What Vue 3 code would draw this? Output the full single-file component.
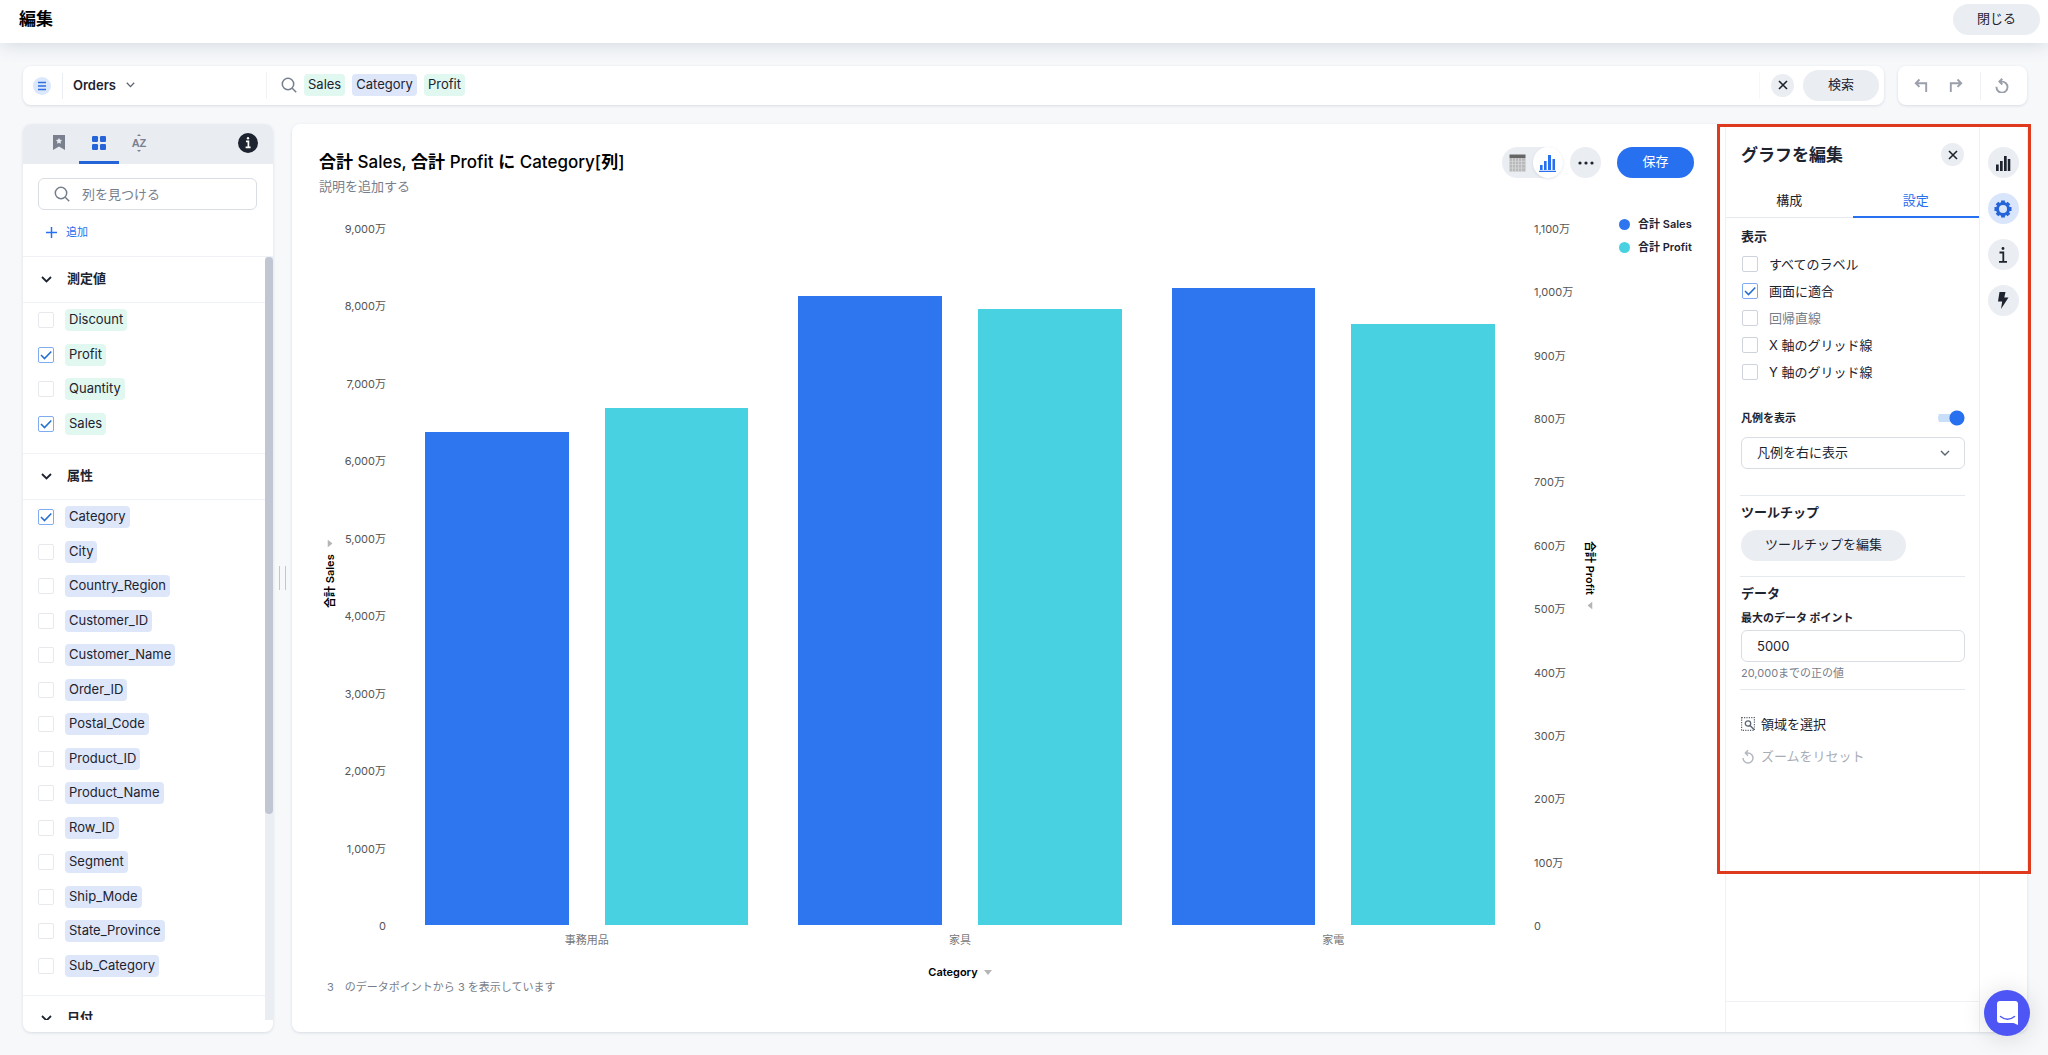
<script setup>
import { ref, reactive } from 'vue'

const tokens = [
  { name: 'Sales', kind: 'measure' },
  { name: 'Category', kind: 'attribute' },
  { name: 'Profit', kind: 'measure' },
]

const groups = reactive([
  {
    id: 'measures',
    title: '測定値',
    kind: 'measure',
    columns: [
      { name: 'Discount', on: false },
      { name: 'Profit', on: true },
      { name: 'Quantity', on: false },
      { name: 'Sales', on: true },
    ],
  },
  {
    id: 'attributes',
    title: '属性',
    kind: 'attribute',
    columns: [
      { name: 'Category', on: true },
      { name: 'City', on: false },
      { name: 'Country_Region', on: false },
      { name: 'Customer_ID', on: false },
      { name: 'Customer_Name', on: false },
      { name: 'Order_ID', on: false },
      { name: 'Postal_Code', on: false },
      { name: 'Product_ID', on: false },
      { name: 'Product_Name', on: false },
      { name: 'Row_ID', on: false },
      { name: 'Segment', on: false },
      { name: 'Ship_Mode', on: false },
      { name: 'State_Province', on: false },
      { name: 'Sub_Category', on: false },
    ],
  },
  { id: 'dates', title: '日付', kind: 'attribute', columns: [] },
])

// Values are in units of 万
const SALES_MAX = 9000
const PROFIT_MAX = 1100
const salesTicks = ['9,000万', '8,000万', '7,000万', '6,000万', '5,000万', '4,000万', '3,000万', '2,000万', '1,000万', '0']
const profitTicks = ['1,100万', '1,000万', '900万', '800万', '700万', '600万', '500万', '400万', '300万', '200万', '100万', '0']
const series = [
  { label: '事務用品', sales: 6368, profit: 816 },
  { label: '家具', sales: 8120, profit: 972 },
  { label: '家電', sales: 8230, profit: 949 },
]
const height = (value, max) => ({ height: (value / max) * 100 + '%' })

const display = reactive([
  { label: 'すべてのラベル', on: false },
  { label: '画面に適合', on: true },
  { label: '回帰直線', on: false, disabled: true },
  { label: 'X 軸のグリッド線', on: false },
  { label: 'Y 軸のグリッド線', on: false },
])
const showLegend = ref(true)
const legendPosition = ref('right')
const maxPoints = ref('5000')
</script>

<template>
  <div class="app">
    <header class="topbar">
      <h1>編集</h1>
      <button class="pill">閉じる</button>
    </header>

    <div class="toolbar">
      <div class="card searchbar">
        <div class="source">
          <span class="source-icon">
            <svg width="8" height="10" viewBox="0 0 8 10"><path d="M0 1.5h8M0 5h8M0 8.5h8" stroke="#2f6fe0" stroke-width="1.3" /></svg>
          </span>
          <button class="source-name">
            Orders
            <svg width="9" height="6" viewBox="0 0 9 6"><path d="M.8.8 4.500 4.600 8.200.8" fill="none" stroke="#5b6270" stroke-width="1.300" /></svg>
          </button>
        </div>
        <div class="query">
          <svg class="lens" width="16" height="16" viewBox="0 0 16 16"><circle cx="7" cy="7" r="5.700" /><path d="m11.200 11.200 4 4" /></svg>
          <span v-for="t in tokens" :key="t.name" class="chip" :class="t.kind">{{ t.name }}</span>
          <input type="text" aria-label="検索" />
          <button class="round small" aria-label="クリア">
            <svg width="10" height="10" viewBox="0 0 10 10"><path d="m1 1 8 8M9 1 1 9" stroke="#1d232f" stroke-width="1.600" /></svg>
          </button>
          <button class="pill search">検索</button>
        </div>
      </div>
      <div class="card history">
        <button aria-label="元に戻す">
          <svg width="14" height="15" viewBox="0 0 14 15"><path d="M5.500 1.500 1.800 5.200l3.700 3.700M2 5.200h10.200V14" /></svg>
        </button>
        <button aria-label="やり直し">
          <svg width="14" height="15" viewBox="0 0 14 15"><path d="m8.500 1.500 3.700 3.700-3.700 3.700M12 5.200H1.800V14" /></svg>
        </button>
        <button class="reset" aria-label="リセット">
          <svg width="14" height="15" viewBox="0 0 14 15"><path d="M1.500 8.800A5.500 5.500 0 1 0 7 3.600H4.500M7.300.8 4.400 3.600l2.900 2.900" /></svg>
        </button>
      </div>
    </div>

    <main class="workspace">
      <aside class="card sidebar">
        <nav class="side-tabs">
          <button aria-label="ブックマーク">
            <svg width="12" height="15" viewBox="0 0 12 15"><path fill="#7a808e" d="M0 0h12v15l-6-3.500L0 15z" /><path fill="#e9edf2" d="m6 2.800.95 2 2.150.3-1.550 1.500.37 2.150L6 7.700 4.080 8.750l.37-2.150L2.900 5.100l2.150-.3z" /></svg>
          </button>
          <button class="active" aria-label="グループ">
            <svg width="14" height="14" viewBox="0 0 14 14" fill="#2563d8"><rect width="6" height="6" rx="1.200" /><rect x="8" width="6" height="6" rx="1.200" /><rect y="8" width="6" height="6" rx="1.200" /><rect x="8" y="8" width="6" height="6" rx="1.200" /></svg>
          </button>
          <button class="az" aria-label="並べ替え">
            <svg width="6" height="2" viewBox="0 0 6 2"><path d="M3 0 5 2H1z" fill="#7a808e" /></svg>
            <span>AZ</span>
            <svg width="6" height="2" viewBox="0 0 6 2"><path d="M3 2 5 0H1z" fill="#7a808e" /></svg>
          </button>
          <button class="info" aria-label="情報">
            <svg width="20" height="20" viewBox="0 0 20 20"><circle cx="10" cy="10" r="10" fill="#1d232f" /><path d="M8 8.300h2.400v6M7.600 14.300h5" fill="none" stroke="#fff" stroke-width="1.700" /><circle cx="10" cy="5.200" r="1.200" fill="#fff" /></svg>
          </button>
        </nav>

        <label class="find">
          <svg class="lens" width="16" height="16" viewBox="0 0 16 16"><circle cx="7" cy="7" r="5.700" /><path d="m11.200 11.200 4 4" /></svg>
          <input type="text" placeholder="列を見つける" aria-label="列を見つける" />
        </label>
        <button class="add">
          <svg width="11" height="11" viewBox="0 0 11 11"><path d="M5.500 0v11M0 5.500h11" stroke="#2770ef" stroke-width="1.500" /></svg>
          追加
        </button>

        <div class="scroll-area">
          <div class="groups">
            <section v-for="g in groups" :key="g.id">
              <h2>
                <svg width="11" height="7" viewBox="0 0 11 7"><path d="m1 1 4.500 4.500L10 1" fill="none" stroke="#1d232f" stroke-width="1.800" /></svg>
                {{ g.title }}
              </h2>
              <div class="columns" :class="g.id">
                <label v-for="c in g.columns" :key="c.name" class="column">
                  <input v-model="c.on" type="checkbox" class="check faint" />
                  <span class="chip" :class="g.kind">{{ c.name }}</span>
                </label>
              </div>
            </section>
          </div>
          <div class="track"><div class="thumb"></div></div>
        </div>
      </aside>

      <div class="splitter"><i></i><i></i></div>

      <section class="card answer">
        <div class="chart">
          <div class="chart-head">
            <div class="titles">
              <h2><b>合計</b> Sales, <b>合計</b> Profit <b>に</b> Category[<b>列</b>]</h2>
              <p>説明を追加する</p>
            </div>
            <div class="switcher">
              <button aria-label="表">
                <svg width="17" height="18" viewBox="0 0 17 18"><path fill="#b9b9b9" d="M.5 4h16v13.500H.5z" /><path fill="#666" d="M.5.500h16V4H.5z" /><path d="M3.500 4v14M6.500 4v14M9.500 4v14M12.500 4v14M.5 7.300h16M.5 10.600h16M.5 14h16" stroke="#d9dbde" stroke-width=".7" /></svg>
              </button>
              <button class="active" aria-label="グラフ">
                <svg width="17" height="18" viewBox="0 0 17 18"><path fill="#2770ef" d="M1 11h2.600v5H1zM5 7h2.600v9H5zM9 1h3v15H9zM13.500 5H16v11h-2.500zM0 16.800h17V18H0z" /></svg>
              </button>
            </div>
            <button class="round" aria-label="その他">
              <svg width="16" height="4" viewBox="0 0 16 4" fill="#1d232f"><circle cx="2" cy="2" r="1.600" /><circle cx="8" cy="2" r="1.600" /><circle cx="14" cy="2" r="1.600" /></svg>
            </button>
            <button class="pill save">保存</button>
          </div>

          <div class="plot-grid">
            <div class="axis-title left"><span>合計 Sales</span><svg width="8" height="5" viewBox="0 0 8 5"><path d="M0 0h8L4 5z" /></svg></div>
            <ol class="ticks left"><li v-for="t in salesTicks" :key="t">{{ t }}</li></ol>
            <div class="plot">
              <div v-for="s in series" :key="s.label" class="cluster">
                <div class="bar sales" :style="height(s.sales, SALES_MAX)"></div>
                <div class="bar profit" :style="height(s.profit, PROFIT_MAX)"></div>
              </div>
            </div>
            <ol class="ticks right"><li v-for="t in profitTicks" :key="t">{{ t }}</li></ol>
            <div class="axis-title right"><span>合計 Profit</span><svg width="8" height="5" viewBox="0 0 8 5"><path d="M0 0h8L4 5z" /></svg></div>
            <ul class="legend">
              <li><i class="sales"></i>合計 Sales</li>
              <li><i class="profit"></i>合計 Profit</li>
            </ul>
            <ol class="categories"><li v-for="s in series" :key="s.label">{{ s.label }}</li></ol>
            <div class="x-title">Category<svg width="8" height="5" viewBox="0 0 8 5"><path d="M0 0h8L4 5z" /></svg></div>
          </div>
          <p class="foot">3　のデータポイントから 3 を表示しています</p>
        </div>

        <aside class="settings">
          <div class="settings-head">
            <h2>グラフを編集</h2>
            <button class="round small" aria-label="パネルを閉じる">
              <svg width="10" height="10" viewBox="0 0 10 10"><path d="m1 1 8 8M9 1 1 9" stroke="#1d232f" stroke-width="1.600" /></svg>
            </button>
          </div>
          <div class="tabs">
            <button>構成</button>
            <button class="active">設定</button>
          </div>
          <div class="settings-body">
            <section class="display">
              <h3>表示</h3>
              <label v-for="d in display" :key="d.label" class="option" :class="{ disabled: d.disabled }">
                <input v-model="d.on" type="checkbox" class="check" :disabled="d.disabled" />
                {{ d.label }}
              </label>
              <label class="toggle">
                凡例を表示
                <input v-model="showLegend" type="checkbox" role="switch" />
              </label>
              <div class="select">
                <select v-model="legendPosition" aria-label="凡例の位置">
                  <option value="right">凡例を右に表示</option>
                </select>
                <svg width="10" height="7" viewBox="0 0 10 7"><path d="m1 1 4 4 4-4" fill="none" stroke="#5b6270" stroke-width="1.400" /></svg>
              </div>
            </section>
            <section class="tooltip">
              <h3>ツールチップ</h3>
              <button class="pill">ツールチップを編集</button>
            </section>
            <section class="data">
              <h3>データ</h3>
              <label for="max-points">最大のデータ ポイント</label>
              <input id="max-points" v-model="maxPoints" type="text" />
              <p>20,000までの正の値</p>
            </section>
            <section class="zoom">
              <button>
                <svg width="14" height="14" viewBox="0 0 14 14" fill="none" stroke="#5b6270"><rect x=".6" y=".6" width="12.800" height="12.800" stroke-width="1.200" stroke-dasharray="1.200 1.200" /><circle cx="7" cy="6.500" r="2.700" stroke-width="1.300" /><path d="m9 8.500 4 4" stroke-width="1.500" /></svg>
                領域を選択
              </button>
              <button disabled>
                <svg width="14" height="15" viewBox="0 0 14 15" fill="none" stroke="#b4b8c0" stroke-width="1.500"><path d="M2 9A5 5 0 1 0 7 4H4.500M7 1.200 4.400 4 7 6.600" /></svg>
                ズームをリセット
              </button>
            </section>
          </div>
          <div class="settings-foot"></div>
        </aside>

        <nav class="rail">
          <button class="round" aria-label="グラフ">
            <svg width="16" height="16" viewBox="0 0 16 16"><path fill="#1d232f" d="M1 9.500h2.700V16H1zM5 6h2.700v10H5zM9 1h2.700v15H9zM12.800 4h2.500v12h-2.500z" /></svg>
          </button>
          <button class="round active" aria-label="設定">
            <svg width="18" height="18" viewBox="0 0 18 18"><circle cx="9" cy="9" r="5.500" fill="none" stroke="#2563d8" stroke-width="3" /><path stroke="#2563d8" stroke-width="3.800" d="M9 .5V3M9 15v2.500M.5 9H3M15 9h2.500M3 3l1.700 1.700M13.300 13.300 15 15M3 15l1.700-1.700M13.300 4.700 15 3" /></svg>
          </button>
          <button class="round" aria-label="情報">
            <svg width="10" height="18" viewBox="0 0 10 18"><path d="M1.500 6.500h3.800v9M1 15.800h8" fill="none" stroke="#1d232f" stroke-width="1.800" /><circle cx="5" cy="2.500" r="1.400" fill="#1d232f" /></svg>
          </button>
          <button class="round" aria-label="SpotIQ">
            <svg width="12" height="17" viewBox="0 0 12 17"><path fill="#1d232f" d="M2.500 0h6L7.300 5.500h4.200L4 17l1.200-7.500H1z" /></svg>
          </button>
        </nav>
        <div class="highlight"></div>
      </section>
    </main>

    <button class="chat" aria-label="チャット">
      <svg width="21" height="24" viewBox="0 0 21 24"><path fill="#fff" d="M3 0h15a3 3 0 0 1 3 3v21l-4.500-2H3a3 3 0 0 1-3-3V3a3 3 0 0 1 3-3z" /><path d="M3.500 15.500c4.300 3.400 9.700 3.400 14 0" fill="none" stroke="#4d55f5" stroke-width="1.500" stroke-linecap="round" /></svg>
    </button>
  </div>
</template>

<style>
body {
  background: #f6f8fa;
}
</style>

<style scoped>
.app {
  display: flex;
  flex-direction: column;
  height: 100vh;
  overflow: hidden;
  font: 13px/16px Inter, "Noto Sans CJK JP", sans-serif;
  color: #1d232f;
}
* {
  box-sizing: border-box;
}
h1, h2, h3, p, ol, ul {
  margin: 0;
  padding: 0;
  list-style: none;
}
button, input, select {
  font: inherit;
  color: inherit;
  border: 0;
  padding: 0;
  margin: 0;
  background: none;
}
input:focus {
  outline: none;
}
svg {
  display: block;
  flex: none;
}
.card {
  background: #fff;
  border-radius: 8px;
  box-shadow: 0 1px 3px rgba(40, 60, 90, 0.14);
}
.pill {
  height: 31px;
  padding: 0 24px 3px;
  border-radius: 16px;
  background: #eaedf2;
}
.round {
  display: flex;
  align-items: center;
  justify-content: center;
  flex: none;
  width: 31px;
  height: 31px;
  border-radius: 50%;
  background: #eaedf2;
}
.round.small {
  width: 23px;
  height: 23px;
}
.chip {
  height: 22px;
  padding: 0 4px;
  border-radius: 4px;
  line-height: 21px;
}
.chip.measure {
  background: #e0f8f0;
}
.chip.attribute {
  background: #dee7fa;
}
.lens {
  fill: none;
  stroke: #777e8b;
  stroke-width: 1.5;
}
.check {
  appearance: none;
  flex: none;
  width: 16px;
  height: 16px;
  border: 1px solid #cfd3db;
  border-radius: 2px;
  background: #fff;
}
.check.faint {
  border-color: #e6e9ee;
}
.check:checked {
  border-color: #7fabf0;
  background: #fff url("data:image/svg+xml,%3Csvg xmlns='http://www.w3.org/2000/svg' viewBox='0 0 14 14'%3E%3Cpath d='m2 7 3.500 3.500L12.300 3.500' fill='none' stroke='%232770cf' stroke-width='1.600'/%3E%3C/svg%3E") center / 14px no-repeat;
}

.topbar {
  display: flex;
  align-items: flex-start;
  justify-content: space-between;
  height: 43px;
  padding: 4px 8px 0 19px;
  background: #fff;
  box-shadow: 0 0 20px rgba(50, 70, 100, 0.2);
}
.topbar h1 {
  font-size: 17px;
  line-height: 31px;
  color: #000;
}

.toolbar {
  display: flex;
  gap: 14px;
  padding: 23px 21px 19px 23px;
}
.searchbar {
  display: flex;
  flex: 1;
  height: 39px;
  align-items: center;
}
.source {
  display: flex;
  align-items: center;
  width: 244px;
  height: 27px;
  padding-left: 10px;
  border-right: 1px solid #f0f2f5;
}
.source-icon {
  display: flex;
  align-items: center;
  justify-content: center;
  width: 18px;
  height: 18px;
  border-radius: 50%;
  background: #dbe7fb;
}
.source-name {
  display: flex;
  align-items: center;
  gap: 10px;
  height: 26px;
  margin-left: 11px;
  padding-left: 10px;
  padding-bottom: 2px;
  border-left: 1px solid #eaedf2;
  font-size: 13px;
  font-weight: 600;
}
.query {
  display: flex;
  flex: 1;
  align-items: center;
  padding: 0 5px 1px 14px;
}
.query .chip {
  margin-left: 7px;
}
.query input {
  flex: 1;
  min-width: 0;
  height: 27px;
  margin: 0 11px;
  border-right: 1px solid #f6f7f9;
}
.search {
  width: 76px;
  margin-left: 9px;
}
.history {
  display: flex;
  align-items: center;
  width: 129px;
  padding-left: 5px;
}
.history button {
  display: flex;
  align-items: center;
  justify-content: center;
  width: 35px;
  height: 28px;
}
.history .reset {
  flex: 1;
  margin-left: 7px;
  padding-right: 4px;
  border-left: 1px solid #eef0f4;
}
.history svg {
  fill: none;
  stroke: #9a9fa9;
  stroke-width: 1.9;
}

.workspace {
  display: flex;
  flex: 1;
  min-height: 0;
  padding: 0 21px 23px 23px;
}
.sidebar {
  display: flex;
  flex-direction: column;
  width: 250px;
  overflow: hidden;
}
.side-tabs {
  display: flex;
  flex: none;
  height: 40px;
  padding: 0 15px 0 16px;
  background: #e9edf2;
}
.side-tabs button {
  display: flex;
  align-items: center;
  justify-content: center;
  width: 40px;
  border-bottom: 3px solid transparent;
}
.side-tabs .active {
  border-color: #2563d8;
}
.side-tabs .az {
  flex-direction: column;
  gap: 1px;
  font-family: "Liberation Sans", sans-serif;
  font-size: 11px;
  line-height: 12px;
  font-weight: 700;
  color: #7a808e;
}
.side-tabs .info {
  width: 20px;
  margin-left: auto;
}
.find {
  display: flex;
  align-items: center;
  gap: 12px;
  flex: none;
  height: 32px;
  margin: 14px 16px 0 15px;
  padding: 0 15px;
  border: 1px solid #d9dde4;
  border-radius: 6px;
}
.find input {
  flex: 1;
  min-width: 0;
  height: 28px;
}
.find input::placeholder {
  color: #777e8b;
}
.add {
  display: flex;
  align-items: center;
  gap: 9px;
  height: 46px;
  padding: 0 0 2px 23px;
  font-size: 11px;
  color: #2770ef;
}
.scroll-area {
  display: flex;
  flex: 1;
  min-height: 0;
  margin-bottom: 12px;
  border-top: 1px solid #eff1f4;
}
.groups {
  flex: 1;
  overflow: hidden;
}
.groups section {
  border-bottom: 1px solid #eff2f7;
}
.groups h2 {
  display: flex;
  align-items: center;
  gap: 15px;
  height: 46px;
  padding: 0 0 3px 18px;
  border-bottom: 1px solid #eff2f7;
  font-size: 13px;
}
.groups h2 svg {
  margin-top: 3px;
}
.columns {
  display: grid;
  grid-auto-rows: 1fr;
  align-items: center;
  margin-bottom: 12px;
}
.measures {
  height: 138px;
}
.attributes {
  height: 483px;
}
.column {
  display: flex;
  align-items: center;
  gap: 11px;
  padding-left: 15px;
}
.track {
  width: 8px;
  background: #eaedf2;
}
.thumb {
  height: 73%;
  border-radius: 4px;
  background: #c0c6d2;
}
.splitter {
  display: flex;
  align-items: center;
  justify-content: center;
  gap: 5px;
  width: 19px;
}
.splitter i {
  width: 1px;
  height: 24px;
  background: #c0c6d2;
}

.answer {
  position: relative;
  display: flex;
  flex: 1;
  min-width: 0;
}
.chart {
  display: flex;
  flex-direction: column;
  flex: 1;
  min-width: 0;
  padding-bottom: 38px;
}
.chart-head {
  display: flex;
  align-items: flex-start;
  height: 92px;
  padding: 23px 31px 0 27px;
}
.titles {
  flex: 1;
}
.titles h2 {
  font-size: 17px;
  line-height: 30px;
  font-weight: 500;
  color: #000;
}
.titles p {
  line-height: 18px;
  color: #777e8b;
}
.switcher {
  display: flex;
  width: 61px;
  height: 31px;
  border-radius: 16px;
  background: #eaedf2;
}
.switcher button {
  display: flex;
  flex: 1;
  align-items: center;
  justify-content: center;
  border-radius: 50%;
}
.switcher .active {
  background: #fff;
  box-shadow: 0 1px 3px rgba(40, 60, 90, 0.12);
}
.chart-head .round {
  margin: 0 8px 0 7px;
}
.save {
  width: 77px;
  margin-left: 8px;
  background: #2770ef;
  color: #fff;
}
.plot-grid {
  display: grid;
  flex: 1;
  min-height: 0;
  grid-template-columns: 14px 63px 1fr 63px 14px 128px;
  grid-template-rows: 1fr 14px 33px;
  padding-left: 31px;
}
.ticks {
  display: flex;
  flex-direction: column;
  justify-content: space-between;
  padding: 6px 14px 0;
  font-size: 11px;
  line-height: 14px;
  color: #555;
}
.ticks.left {
  padding-left: 0;
  text-align: right;
}
.ticks.right {
  padding-right: 0;
}
.plot {
  display: grid;
  grid-template-columns: repeat(3, 1fr);
  padding: 12px 0 8px;
}
.cluster {
  display: flex;
  align-items: flex-end;
  gap: 36px;
  padding: 0 25px;
}
.bar {
  flex: 1;
}
.sales {
  background: #2e75f0;
}
.profit {
  background: #48d1e0;
}
.axis-title {
  display: flex;
  align-items: center;
  justify-content: center;
  gap: 8px;
  writing-mode: vertical-rl;
  text-orientation: sideways;
  font-size: 11px;
  line-height: 14px;
  font-weight: 600;
  color: #000;
}
.axis-title.left {
  transform: rotate(180deg);
}
.axis-title svg {
  transform: rotate(90deg);
}
.axis-title svg, .x-title svg {
  fill: #b5b5b5;
}
.legend {
  display: flex;
  flex-direction: column;
  gap: 7px;
  padding-left: 22px;
}
.legend li {
  display: flex;
  align-items: center;
  gap: 8px;
  font-size: 11px;
  font-weight: 600;
}
.legend i {
  width: 11px;
  height: 11px;
  border-radius: 50%;
}
.categories {
  display: grid;
  grid-column: 3;
  grid-template-columns: repeat(3, 1fr);
  text-align: center;
  font-size: 11px;
  line-height: 14px;
  color: #777;
}
.x-title {
  display: flex;
  grid-column: 3;
  align-items: flex-end;
  justify-content: center;
  gap: 6px;
  font-size: 11px;
  line-height: 16px;
  font-weight: 600;
  color: #000;
}
.x-title svg {
  margin-bottom: 5px;
}
.foot {
  padding-left: 35px;
  font-size: 11px;
  line-height: 14px;
  color: #777e8b;
}

.settings {
  display: flex;
  flex-direction: column;
  width: 254px;
  border-left: 1px solid #eff1f4;
}
.settings-head {
  display: flex;
  align-items: center;
  justify-content: space-between;
  height: 61px;
  padding: 0 15px;
}
.settings-head h2 {
  font-size: 17px;
  line-height: 24px;
}
.tabs {
  display: flex;
  height: 33px;
  border-bottom: 1px solid #e6e9ee;
}
.tabs button {
  flex: 1;
  height: 33px;
  padding-bottom: 2px;
  border-bottom: 2px solid transparent;
}
.tabs .active {
  border-color: #2770ef;
  color: #2770ef;
}
.settings-body {
  flex: 1;
  padding: 0 14px;
}
.settings-body h3 {
  font-size: 13px;
  line-height: 18px;
}
.settings-body section {
  padding: 7px 0 15px 1px;
  border-bottom: 1px solid #e6e9ee;
}
.settings-body .display {
  padding: 9px 0 26px 1px;
}
.option {
  display: flex;
  align-items: center;
  gap: 11px;
  height: 27px;
  padding-left: 1px;
}
.display h3 {
  margin-bottom: 5px;
}
.option.disabled {
  color: #777e8b;
}
.toggle {
  display: flex;
  align-items: center;
  justify-content: space-between;
  margin: 25px 0 11px;
  font-size: 11px;
  font-weight: 700;
}
.toggle input {
  appearance: none;
  width: 27px;
  height: 16px;
  border-radius: 8px;
  background:
    radial-gradient(circle at 19px 8px, #2770ef 7px, transparent 8px),
    linear-gradient(#c9def8, #c9def8) 0 4px / 18px 8px no-repeat;
}
.select {
  display: flex;
  align-items: center;
}
.select select, .data input {
  appearance: none;
  width: 100%;
  height: 32px;
  padding: 0 15px;
  border: 1px solid #d9dde4;
  border-radius: 6px;
  background: #fff;
}
.select select {
  padding-bottom: 2px;
}
.select svg {
  margin-left: -25px;
  margin-right: 15px;
  pointer-events: none;
}
.tooltip .pill {
  margin-top: 9px;
}
.data label {
  display: block;
  margin: 9px 0 5px;
  font-size: 11px;
  line-height: 14px;
  font-weight: 700;
}
.data p {
  padding-top: 4px;
  font-size: 11px;
  line-height: 14px;
  color: #777e8b;
}
.settings-body .data {
  padding-bottom: 9px;
}
.settings-body .zoom {
  display: flex;
  flex-direction: column;
  align-items: flex-start;
  gap: 16px;
  padding-top: 26px;
  border: 0;
}
.zoom button {
  display: flex;
  align-items: center;
  gap: 6px;
}
.zoom button:disabled {
  color: #a9adb6;
}
.settings-foot {
  height: 31px;
  border-top: 1px solid #eff1f4;
}
.rail {
  display: flex;
  flex-direction: column;
  align-items: center;
  gap: 15px;
  width: 48px;
  padding: 23px 1px 0 0;
  border-left: 1px solid #eff1f4;
}
.rail .active {
  background: #d9e5fb;
}
.highlight {
  position: absolute;
  top: 0;
  right: -4px;
  width: 314px;
  height: 750px;
  border: 3px solid #df3a1e;
  pointer-events: none;
}
.chat {
  position: fixed;
  right: 18px;
  bottom: 19px;
  display: flex;
  align-items: center;
  justify-content: center;
  width: 46px;
  height: 46px;
  border-radius: 50%;
  background: #4d55f5;
  box-shadow: 0 2px 24px rgba(0, 0, 0, 0.14);
}
</style>
